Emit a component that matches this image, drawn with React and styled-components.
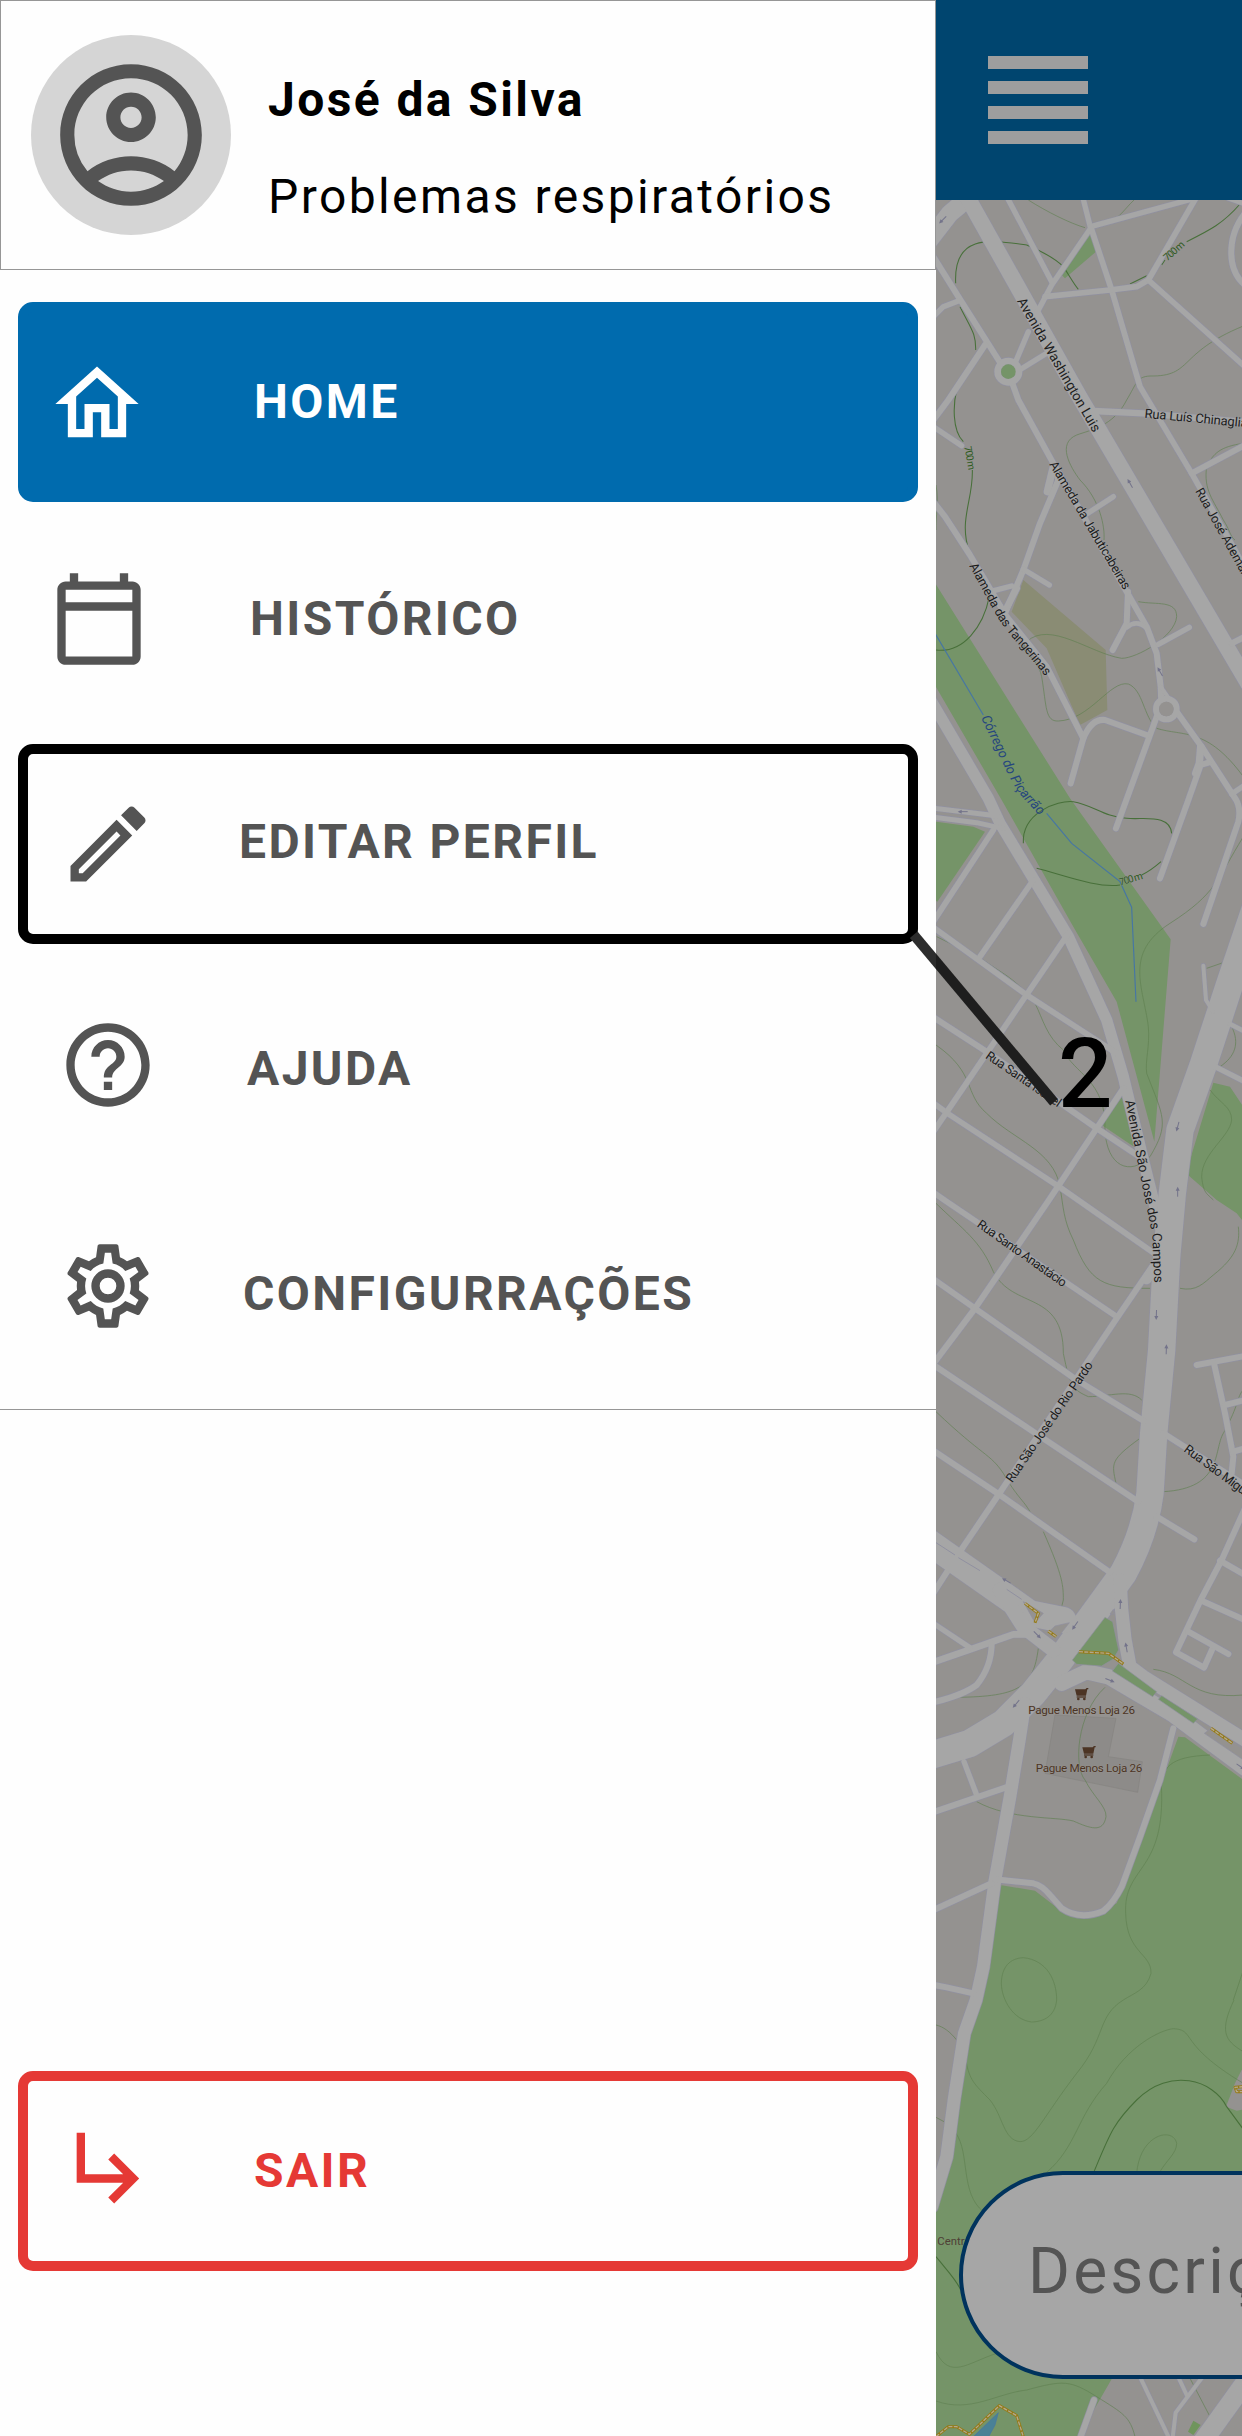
import React from "react";
import styled, { createGlobalStyle } from "styled-components";
import {
  MdOutlineAccountCircle,
  MdOutlineHome,
  MdOutlineCalendarToday,
  MdOutlineEdit,
  MdHelpOutline,
  MdSubdirectoryArrowRight,
} from "react-icons/md";

const GlobalStyle = createGlobalStyle`
  *, *::before, *::after { box-sizing: border-box; }
  body { margin: 0; background: #fefefe; font-family: Roboto, "Liberation Sans", sans-serif; }
  h1, p { margin: 0; }
`;

const Screen = styled.div`
  position: relative;
  display: grid;
  grid-template-columns: 936px 306px;
  width: 1242px;
  height: 2436px;
  overflow: hidden;
`;

/* ---------- drawer ---------- */

const Drawer = styled.aside`
  display: flex;
  flex-direction: column;
  background: #fefefe;
`;

const Profile = styled.header`
  display: flex;
  gap: 37px;
  height: 270px;
  padding: 34px 30px;
  border: 1px solid #969696;
`;

const Avatar = styled.div`
  display: flex;
  align-items: center;
  justify-content: center;
  flex: none;
  width: 200px;
  height: 200px;
  border-radius: 50%;
  background: #d5d5d5;
  color: #545454;
  svg { width: 170px; height: 170px; }
`;

const ProfileText = styled.div`
  display: flex;
  flex-direction: column;
  padding-top: 37px;
  color: #000;
`;

const Name = styled.h1`
  font-size: 48px;
  line-height: 56px;
  font-weight: 700;
  letter-spacing: 2.4px;
  white-space: nowrap;
`;

const Condition = styled.p`
  margin-top: 41px;
  font-size: 48px;
  line-height: 56px;
  letter-spacing: 2.4px;
  white-space: nowrap;
`;

const Menu = styled.nav`
  display: flex;
  flex-direction: column;
  gap: 21px;
  padding: 32px 18px 23px;
  border-bottom: 1px solid #969696;
`;

const tones = {
  active: { bg: "#006bae", fg: "#fff", border: "#006bae" },
  plain: { bg: "transparent", fg: "#545454", border: "transparent" },
  outlined: { bg: "transparent", fg: "#545454", border: "#000" },
  danger: { bg: "transparent", fg: "#e53935", border: "#e53935" },
};

const Item = styled.a`
  display: flex;
  align-items: flex-start;
  height: 200px;
  border: 10px solid ${(p) => tones[p.$tone].border};
  border-radius: 15px;
  background: ${(p) => tones[p.$tone].bg};
  color: ${(p) => tones[p.$tone].fg};
  text-decoration: none;
`;

const ItemIcon = styled.span`
  display: flex;
  flex: none;
  width: 100px;
  height: 100px;
  margin: ${(p) => p.$top}px 0 0 ${(p) => p.$left}px;
  svg { width: 100px; height: 100px; }
`;

const ItemLabel = styled.span`
  margin: ${(p) => p.$top}px 0 0 ${(p) => p.$gap}px;
  font-size: 48px;
  line-height: 56px;
  font-weight: 700;
  letter-spacing: 2.4px;
  white-space: nowrap;
`;

const Footer = styled.footer`
  margin-top: auto;
  padding: 0 18px 165px;
`;

/* ---------- dimmed page behind the drawer ---------- */

const Page = styled.main`
  display: flex;
  flex-direction: column;
  overflow: hidden;
`;

const TopBar = styled.div`
  display: flex;
  flex: none;
  height: 200px;
  padding: 56px 0 0 52px;
  background: #00456f;
`;

const Burger = styled.div`
  display: flex;
  flex-direction: column;
  gap: 12.5px;
  width: 100px;
`;

const BurgerBar = styled.span`
  height: 12.5px;
  background: #9e9e9e;
`;

const MapArea = styled.section`
  position: relative;
  flex: 1;
  overflow: hidden;
`;

const MapCanvas = styled.svg`
  display: block;
  width: 306px;
  height: 2236px;
  font-family: Roboto, "Liberation Sans", sans-serif;
`;

const SearchPill = styled.div`
  position: absolute;
  left: 23px;
  top: 1971px;
  display: flex;
  align-items: center;
  width: 900px;
  height: 208px;
  padding-left: 65px;
  padding-bottom: 8px;
  border: 4px solid #00335d;
  border-radius: 104px;
  background: #a6a6a6;
  color: #545454;
  font-size: 64px;
  letter-spacing: 3.2px;
`;

const Callout = styled.svg`
  position: absolute;
  left: 900px;
  top: 920px;
  width: 170px;
  height: 200px;
`;

const CalloutNumber = styled.span`
  position: absolute;
  left: 1058px;
  top: 1018px;
  font-size: 96px;
  line-height: 112px;
  font-weight: 500;
  color: #000;
`;

const CogOutline = () => (
  <svg viewBox="0 0 24 24" fill="currentColor">
    <path d="M12,8A4,4 0 0,1 16,12A4,4 0 0,1 12,16A4,4 0 0,1 8,12A4,4 0 0,1 12,8M12,10A2,2 0 0,0 10,12A2,2 0 0,0 12,14A2,2 0 0,0 14,12A2,2 0 0,0 12,10M10,22C9.75,22 9.54,21.82 9.5,21.58L9.13,18.93C8.5,18.68 7.96,18.34 7.44,17.94L4.95,18.95C4.73,19.03 4.46,18.95 4.34,18.73L2.34,15.27C2.21,15.05 2.27,14.78 2.46,14.63L4.57,12.97L4.5,12L4.57,11L2.46,9.37C2.27,9.22 2.21,8.95 2.34,8.73L4.34,5.27C4.46,5.05 4.73,4.96 4.95,5.05L7.44,6.05C7.96,5.66 8.5,5.32 9.13,5.07L9.5,2.42C9.54,2.18 9.75,2 10,2H14C14.25,2 14.46,2.18 14.5,2.42L14.87,5.07C15.5,5.32 16.04,5.66 16.56,6.05L19.05,5.05C19.27,4.96 19.54,5.05 19.66,5.27L21.66,8.73C21.79,8.95 21.73,9.22 21.54,9.37L19.43,11L19.5,12L19.43,13L21.54,14.63C21.73,14.78 21.79,15.05 21.66,15.27L19.66,18.73C19.54,18.95 19.27,19.04 19.05,18.95L16.56,17.95C16.04,18.34 15.5,18.68 14.87,18.93L14.5,21.58C14.46,21.82 14.25,22 14,22H10M11.25,4L10.88,6.61C9.68,6.86 8.62,7.5 7.85,8.39L5.44,7.35L4.69,8.65L6.8,10.2C6.4,11.37 6.4,12.64 6.8,13.8L4.68,15.36L5.43,16.66L7.86,15.62C8.63,16.5 9.68,17.14 10.87,17.38L11.24,20H12.76L13.13,17.39C14.32,17.14 15.37,16.5 16.14,15.62L18.57,16.66L19.32,15.36L17.2,13.81C17.6,12.64 17.6,11.37 17.2,10.2L19.31,8.65L18.56,7.35L16.15,8.39C15.38,7.5 14.32,6.86 13.12,6.62L12.75,4H11.25Z" />
  </svg>
);

/* ---------- map data (map units: three per pixel) ---------- */

const parks = [
  "482,700 498,755 405,835 390,820",
  "0,1725 420,2395 722,2818 673,3425 560,3005 430,2780 215,2400 0,2030",
  "0,2463 130,2480 165,2495 22,2705 0,2690",
  "580,3285 612,3440 515,3375",
  "850,3248 900,3260 940,3320 940,3665 920,3640 860,3600 768,3520",
  "745,5210 765,5212 940,5340 940,7000 560,7110 545,7137 440,7320 0,7320 0,6650 40,6500 75,6380 103,6130 150,6000 210,5655 315,5672 390,5730 460,5750 560,5710 630,5530",
];

const roads = [
  [54, "M-10,730 L60,640 L120,590"],
  [48, "M90,550 L125,615 L448,1190 L960,2060"],
  [18, "M10,770 L85,890 L215,1095"],
  [18, "M240,1130 L265,1200 L370,1390 L590,1775 L650,1880 L680,1960 L692,2060 L694,2110"],
  [16, "M255,1090 L295,995"],
  [16, "M260,1115 L350,1060"],
  [16, "M10,950 L40,920 L85,903"],
  [18, "M165,1035 L55,1200 L10,1260"],
  [16, "M225,580 L365,845"],
  [16, "M320,940 L365,855 L482,685 L458,590"],
  [16, "M482,680 L790,596"],
  [17, "M482,680 L545,870 L630,1160 L785,1420 L960,1730"],
  [17, "M345,890 L540,870 L620,860 L655,840 L800,590"],
  [17, "M655,840 L945,1100"],
  [18, "M945,640 C890,710 890,810 945,855"],
  [14, "M895,595 L945,612"],
  [19, "M490,1233 L640,1240 L945,1266"],
  [18, "M785,1420 L945,1335"],
  [16, "M10,1280 L95,1337"],
  [18, "M10,1505 L45,1550 L120,1665 L230,1850 L350,2000 L460,2215"],
  [22, "M370,1400 L352,1475"],
  [18, "M375,1400 L385,1440 L330,1570 L280,1710 L225,1840"],
  [20, "M260,1765 L222,1840"],
  [16, "M280,1708 L358,1755"],
  [16, "M180,1775 L245,1758"],
  [16, "M470,1542 L550,1490"],
  [18, "M594,1775 L590,1870 L548,1950"],
  [14, "M590,1882 Q620,1857 650,1885"],
  [16, "M685,1933 L778,1882"],
  [12, "M692,2060 L730,2115"],
  [18, "M680,2150 L558,2485"],
  [18, "M422,2350 L460,2215 Q485,2155 525,2160 L650,2205"],
  [18, "M740,2135 L815,2240 L912,2390 Q935,2420 925,2465 L820,2772"],
  [22, "M812,2240 L808,2290 L797,2320"],
  [18, "M835,2288 L812,2295 L775,2400 L690,2635"],
  [16, "M905,2382 L945,2355"],
  [18, "M905,1930 L945,1910"],
  [34, "M-10,2080 L175,2395 L210,2470 L415,2810 L530,3060 L580,3230 L640,3480 L690,3680"],
  [15, "M0,2423 L180,2445 L210,2450"],
  [15, "M0,2450 L140,2468 L220,2486"],
  [82, "M985,2700 L900,2950 L818,3200 L750,3390 L727,3580 L710,3770 L695,4050 L671,4300 L660,4480 Q645,4600 580,4720 L500,4830 L390,4980 L310,5080 L220,5170 L120,5230 L-10,5270"],
  [17, "M0,2775 L290,2985 L560,3160"],
  [18, "M0,3045 L170,3155 L500,3385 L640,3478"],
  [17, "M0,3302 L60,3345 L390,3562 L690,3772"],
  [17, "M0,3570 L50,3605 L560,3950"],
  [18, "M0,3830 L135,3925 L440,4140 L640,4262"],
  [18, "M0,4088 L320,4302 L625,4505"],
  [18, "M0,4345 L210,4485 L540,4717"],
  [17, "M0,2780 L190,2490"],
  [17, "M150,2870 L310,2640"],
  [17, "M0,3410 L415,2800"],
  [18, "M0,4105 L135,3925 L350,3610 L580,3265"],
  [18, "M690,3765 L560,3955 L205,4485 L100,4640 L0,4795"],
  [30, "M680,3795 L650,3838"],
  [78, "M-20,4615 L300,4840 L400,4860"],
  [44, "M210,4770 L280,4880 L370,4950"],
  [12, "M820,2897 L828,3000 L850,3035"],
  [14, "M900,3072 L945,3095"],
  [16, "M855,3200 L945,3245"],
  [18, "M800,4095 L945,4068"],
  [18, "M852,4090 L885,4240 L910,4370 L905,4420"],
  [18, "M885,4215 L945,4200"],
  [18, "M910,4355 L945,4345"],
  [18, "M700,4300 L960,4465"],
  [18, "M680,4550 L793,4618"],
  [18, "M945,4525 L875,4680 L812,4800 L738,4957 L822,5003 L850,4940"],
  [18, "M870,4682 L945,4725"],
  [18, "M815,4802 L945,4860"],
  [18, "M775,4895 L895,4962"],
  [40, "M570,4740 L575,4830 L585,4920 L600,5000 L640,5030 L945,5220"],
  [46, "M395,5050 L470,5015 L535,5030 L730,5145 L945,5305"],
  [20, "M0,4990 L130,4945 L250,4903 L320,4903"],
  [16, "M10,4870 L120,4943"],
  [18, "M185,4930 Q185,5000 140,5055 Q100,5085 10,5107"],
  [16, "M102,5285 L140,5385"],
  [18, "M0,5440 L235,5360"],
  [38, "M285,5110 L268,5220 L240,5390 L195,5640 L160,5900 L138,6000 L103,6100 L72,6300 L50,6470 L5,6620"],
  [18, "M0,5735 L185,5650"],
  [18, "M195,5638 L310,5650 Q335,5655 360,5685 L395,5725 Q450,5762 520,5733 Q550,5710 575,5660 L630,5510 L690,5340 L730,5185"],
  [18, "M0,5953 L50,5962 L130,5980"],
  [18, "M492,7200 L445,7330"],
  [12, "M625,7120 L720,7320"],
  [12, "M742,7125 L770,7185"],
  [12, "M822,7125 L737,7238 L727,7320"],
  [58, "M980,7100 L800,7350"],
];

const medians = [
  ["#759468", "525,4852 548,4865 566,4950 550,4977 515,4998 440,4993 427,4980"],
  ["#759468", "565,4990 680,5075 668,5090 547,5013"],
  ["#759468", "695,5087 803,5157 790,5170 685,5098"],
  ["#949290", "843,5185 945,5250 945,5283 823,5200"],
  ["#949290", "357,4895 375,4878 418,4868 378,4920"],
  ["#949290", "280,4805 340,4840 315,4868"],
  ["#949290", "540,4842 550,4828 552,4842"],
];

const minorContours = [
  "M295,600 C350,635 420,670 465,683 M500,683 C560,670 580,630 612,600",
  "M590,1200 C620,1150 620,1130 660,1128 C790,1130 740,1060 940,978",
  "M590,1200 C550,1280 480,1290 440,1305 C380,1330 420,1400 450,1440 C510,1500 525,1580 522,1620",
  "M940,1330 C870,1340 850,1360 830,1400 C820,1470 850,1500 880,1560 C900,1590 900,1610 915,1620",
  "M625,1805 C680,1815 740,1800 740,1850 C735,1910 620,1975 575,1975 C480,1960 360,1860 290,1925 C260,1960 320,1960 335,2030 C350,2120 345,2165 385,2163 C480,2160 540,2040 595,2052 C640,2070 640,2150 680,2185 C760,2210 830,2180 940,2330",
  "M18,1455 C28,1510 16,1550 18,1590",
  "M940,2510 C860,2640 860,2680 720,2770 C580,2860 640,2960 655,3080 C660,3140 645,3180 650,3220 C700,3350 720,3370 660,3470 C600,3530 530,3500 525,3390 C530,3240 430,3220 400,3150 C350,3110 340,3060 315,3010 C250,2930 230,2930 160,2880 L20,2810",
  "M830,2905 L888,2885 M905,3080 C930,3130 915,3170 870,3200",
  "M18,3135 C140,3220 100,3280 170,3340 C250,3420 370,3450 390,3560 C400,3620 400,3660 430,3720 C480,3850 520,3865 660,3865 M750,3865 C800,3875 820,3850 850,3825 C920,3770 930,3730 925,3680",
  "M840,3270 C870,3310 905,3320 905,3360 C900,3410 815,3460 815,3530 C820,3580 830,3580 850,3600",
  "M18,3610 C100,3690 150,3720 190,3815 C250,3930 400,3870 400,4060 C420,4160 430,4170 475,4190 C540,4190 600,4165 635,4200",
  "M630,4315 C540,4380 545,4390 558,4450 M700,4475 C880,4465 850,4350 880,4300 C930,4210 920,4190 940,4170",
  "M18,4235 C160,4370 180,4360 220,4420 C260,4490 280,4500 300,4535 M340,4595 C400,4730 400,4760 400,4800 L395,4820 M325,4945 C310,5060 270,5090 80,5092",
  "M670,5008 C770,5020 780,5100 940,5085",
  "M525,5062 C440,5140 430,5300 465,5340 C490,5390 530,5420 528,5450 C520,5500 480,5485 430,5463 C380,5450 240,5460 140,5405",
  "M840,5265 C720,5270 690,5300 695,5380 C700,5620 580,5600 587,5740 C590,5860 665,5860 663,5920 C650,5970 610,5980 580,6000 C500,6050 530,6110 440,6220 C340,6350 310,6425 270,6425 C220,6420 220,6350 180,6300 C130,6250 120,6240 108,6185",
  "M280,5873 C350,5880 380,5940 380,6000 C375,6050 340,6065 305,6066 C250,6060 215,6000 214,5950 C215,5900 240,5875 280,5873",
  "M350,6517 C440,6440 440,6350 530,6250 C590,6140 690,6090 730,6086 C800,6090 740,6130 940,6250",
  "M912,6000 C870,6090 880,6120 940,6155 M940,5910 L910,6000",
  "M620,6520 C630,6400 730,6380 740,6430 C740,6460 710,6480 690,6515",
  "M18,6075 C40,6080 60,6095 80,6120 M18,6352 L42,6365 M78,6400 C120,6460 90,6580 160,6635",
  "M18,7055 C60,7140 110,7090 200,7060 M18,7203 C120,7240 200,7180 290,7170 C400,7140 420,7140 500,7190 C580,7240 600,7250 615,7310",
  "M780,7135 L840,7250",
];

const majorContours = [
  "M77,850 C70,700 180,720 290,735 C350,760 380,780 400,800 C420,830 430,850 445,868",
  "M600,852 L650,827 M695,795 L705,780 M770,725 C840,690 880,670 930,612",
  "M90,920 C125,990 138,1000 137,1050 M80,1170 C70,1210 65,1290 100,1325 M127,1410 C130,1500 85,1560 118,1655 M178,1790 C160,1880 100,1960 18,1950",
  "M280,2530 C275,2440 380,2400 430,2405 C490,2415 520,2450 590,2455 C640,2460 720,2440 725,2500 M693,2585 C670,2605 650,2618 635,2625 M570,2655 C500,2665 400,2625 320,2605",
  "M492,6515 C540,6400 550,6370 620,6300 C720,6200 850,6240 890,6320 L940,6388",
  "M18,6770 C50,6810 80,6840 92,6870",
];

const arrows = [
  [38, 660, 135], [600, 1450, 240], [690, 2015, 240], [98, 2435, 180], [743, 3380, 105],
  [743, 3575, 270], [679, 3945, 92], [709, 4048, 272], [229, 4742, 210], [322, 4905, 45],
  [435, 4877, 125], [571, 4812, 272], [589, 4942, 260], [540, 5041, 22], [258, 5112, 130],
  [932, 5300, 35],
];

const streets = [
  ["Avenida Washington Luis", 41, 458, "M260,903 L490,1300"],
  ["Rua Luís Chinaglia", 39, 310, "M643,1253 L955,1283"],
  ["Alameda da Jabuticabeiras", 38, 440, "M357,1393 L599,1801"],
  ["Alameda das Tangerinas", 38, 405, "M117,1697 L199,1846 Q229,1896 274,1941 L364,2051"],
  ["Rua José Ademar", 38, 292, "M795,1473 L944,1741"],
  ["Rua Santa Isabel", 38, 265, "M164,3173 L399,3333"],
  ["Avenida São José dos Campos", 40, 555, "M586,3302 L631,3530 L667,3710 L675,3900"],
  ["Rua Santo Anastácio", 38, 318, "M139,3679 L409,3869"],
  ["Rua São José do Rio Pardo", 38, 430, "M247,4450 L501,4080"],
  ["Rua São Miguel", 39, 250, "M759,4353 L974,4511"],
];

const contourLabels = [
  [712, 784, -42],
  [103, 1340, 80],
  [571, 2657, -17],
];

const shops = [
  [455, 5142, 5060],
  [477, 5316, 5234],
];

const CityMap = () => (
  <MapCanvas viewBox="18 600 918 6708" preserveAspectRatio="none">
    <rect x="0" y="600" width="960" height="6720" fill="#949290" />
    <g fill="#759468">
      {parks.map((p) => <polygon key={p} points={p} />)}
    </g>
    <polygon points="280,1740 527,1950 532,2130 450,2175 350,1945 245,1835" fill="#8a8c74" />
    <polygon points="375,5145 558,5155 535,5270 637,5285 623,5377 345,5320" fill="#8d8b89" stroke="#858380" strokeWidth="2" />
    <polygon points="945,6190 915,6250 888,6320 920,6332 945,6328" fill="#949290" />
    <polygon points="790,7262 812,7275 790,7305 774,7295" fill="#6f955c" />
    <g fill="none" stroke="#5f7f50" strokeWidth="2.2" opacity="0.85">
      {minorContours.map((d) => <path key={d} d={d} />)}
    </g>
    <g fill="none" stroke="#48703a" strokeWidth="3.2">
      {majorContours.map((d) => <path key={d} d={d} />)}
    </g>
    <g fill="none" stroke="#4676a4" strokeWidth="3.5">
      <path d="M0,1875 L18,1905 L160,2145" />
      <path d="M350,2440 L425,2530 L570,2645 L605,2722 L618,3005" />
    </g>
    <polygon points="205,7238 130,7310 175,7312 195,7275" fill="#4a8196" stroke="#4676a4" strokeWidth="2" />
    <g fill="none" stroke="#9090a0" strokeLinecap="round" strokeLinejoin="round">
      {roads.map(([w, d]) => <path key={d} d={d} strokeWidth={w + 4} />)}
      <circle cx="235" cy="1115" r="32" strokeWidth="24" />
      <circle cx="709" cy="2127" r="31" strokeWidth="22" />
    </g>
    <g fill="none" stroke="#a6a6a6" strokeLinecap="round" strokeLinejoin="round">
      {roads.map(([w, d]) => <path key={d} d={d} strokeWidth={w} />)}
      <circle cx="235" cy="1115" r="32" strokeWidth="20" />
      <circle cx="709" cy="2127" r="31" strokeWidth="18" />
    </g>
    <circle cx="235" cy="1115" r="22" fill="#759468" />
    <circle cx="709" cy="2127" r="22" fill="#949290" />
    {medians.map(([fill, points]) => (
      <polygon key={points} points={points} fill={fill} stroke="#9090a0" strokeWidth="2" />
    ))}
    <path d="M18,4628 L75,4665 M85,4673 L150,4712 M230,4768 L275,4798" stroke="#9090a0" strokeWidth="3" fill="none" />
    <g fill="none" strokeLinejoin="round">
      {[
        "M285,4810 L325,4840 L315,4868",
        "M355,4893 L378,4910",
        "M447,4955 L535,4960 L580,4992",
        "M843,5185 L907,5230",
        "M18,7310 L55,7280 L80,7280 L118,7303 L208,7217 L260,7247 L280,7310",
        "M940,6260 L915,6262 L920,6275 L940,6275",
      ].map((d) => (
        <g key={d}>
          <path d={d} stroke="#957a14" strokeWidth="9" />
          <path d={d} stroke="#b3a88e" strokeWidth="4" strokeDasharray="12 4" />
        </g>
      ))}
    </g>
    <g stroke="#73738a" strokeWidth="3" fill="#73738a">
      {arrows.map(([x, y, a]) => (
        <g key={`${x}-${y}`} transform={`translate(${x} ${y}) rotate(${a})`}>
          <path d="M-15,0 H6" />
          <path d="M3,-6 L15,0 L3,6 Z" strokeWidth="0" />
        </g>
      ))}
    </g>
    <defs>
      {streets.map(([name, , , d], i) => <path key={name} id={`street-${i}`} d={d} />)}
      <path id="stream" d="M153,2153 L235,2325 Q260,2375 290,2405 L350,2470" />
    </defs>
    <g fill="#1c1c1c" stroke="#a6a6a6" strokeWidth="2" paintOrder="stroke">
      {streets.map(([name, size, length], i) => (
        <text key={name} fontSize={size}>
          <textPath href={`#street-${i}`} textLength={length}>{name}</textPath>
        </text>
      ))}
    </g>
    <text fontSize="40" fill="#26467f" fontStyle="italic">
      <textPath href="#stream" textLength="345">Córrego do Piçarrão</textPath>
    </text>
    <g fontSize="30" fill="#2e5a20" stroke="#949290" strokeWidth="2" paintOrder="stroke">
      {contourLabels.map(([x, y, a]) => (
        <text key={y} transform={`translate(${x} ${y}) rotate(${a})`} textLength="72">700 m</text>
      ))}
    </g>
    {shops.map(([x, base, top]) => (
      <g key={base} fill="#4c3424">
        <g transform={`translate(${x - 20} ${top})`}>
          <path d="M0,8 H31 L35,4 H40 V8 H37 L33,27 H5 Z" />
          <path d="M5,29 H33 V33 H5 Z" />
          <circle cx="10" cy="37" r="4" />
          <circle cx="28" cy="37" r="4" />
        </g>
        <text x={x} y={base} fontSize="35" textAnchor="middle" textLength="320" stroke="#9c9a97" strokeWidth="2" paintOrder="stroke">
          Pague Menos Loja 26
        </text>
      </g>
    ))}
    <text x="22" y="6735" fontSize="34" fill="#4f3f36">Centro</text>
  </MapCanvas>
);

const menuItems = [
  { label: "HOME", icon: MdOutlineHome, tone: "active", iconLeft: 19, iconTop: 42, gap: 107, labelTop: 62 },
  { label: "HISTÓRICO", icon: MdOutlineCalendarToday, tone: "plain", iconLeft: 21, iconTop: 36, gap: 101, labelTop: 58 },
  { label: "EDITAR PERFIL", icon: MdOutlineEdit, tone: "outlined", iconLeft: 30, iconTop: 40, gap: 81, labelTop: 60 },
  { label: "AJUDA", icon: MdHelpOutline, tone: "plain", iconLeft: 30, iconTop: 40, gap: 89, labelTop: 66 },
  { label: "CONFIGURRAÇÕES", icon: CogOutline, tone: "plain", iconLeft: 30, iconTop: 40, gap: 85, labelTop: 70 },
];

const exitItem = {
  label: "SAIR", icon: MdSubdirectoryArrowRight, tone: "danger", iconLeft: 32, iconTop: 35, gap: 94, labelTop: 62,
};

const MenuItem = ({ label, icon: Icon, tone, iconLeft, iconTop, gap, labelTop }) => (
  <Item $tone={tone}>
    <ItemIcon $left={iconLeft} $top={iconTop}><Icon /></ItemIcon>
    <ItemLabel $gap={gap} $top={labelTop}>{label}</ItemLabel>
  </Item>
);

export default function App() {
  return (
    <>
      <GlobalStyle />
      <Screen>
        <Drawer>
          <Profile>
            <Avatar><MdOutlineAccountCircle /></Avatar>
            <ProfileText>
              <Name>José da Silva</Name>
              <Condition>Problemas respiratórios</Condition>
            </ProfileText>
          </Profile>
          <Menu>
            {menuItems.map((item) => <MenuItem key={item.label} {...item} />)}
          </Menu>
          <Footer>
            <MenuItem {...exitItem} />
          </Footer>
        </Drawer>
        <Page>
          <TopBar>
            <Burger>
              <BurgerBar /><BurgerBar /><BurgerBar /><BurgerBar />
            </Burger>
          </TopBar>
          <MapArea>
            <CityMap />
            <SearchPill>Descrição</SearchPill>
          </MapArea>
        </Page>
        <Callout viewBox="900 920 170 200">
          <defs>
            <linearGradient id="lead" gradientUnits="userSpaceOnUse" x1="900" y1="0" x2="1070" y2="0">
              <stop offset="0.2118" stopColor="#2d2d2d" />
              <stop offset="0.2118" stopColor="#1e1e1e" />
            </linearGradient>
          </defs>
          <line x1="913.7" y1="934.7" x2="1054" y2="1102.3" stroke="url(#lead)" strokeWidth="10" />
        </Callout>
        <CalloutNumber>2</CalloutNumber>
      </Screen>
    </>
  );
}
